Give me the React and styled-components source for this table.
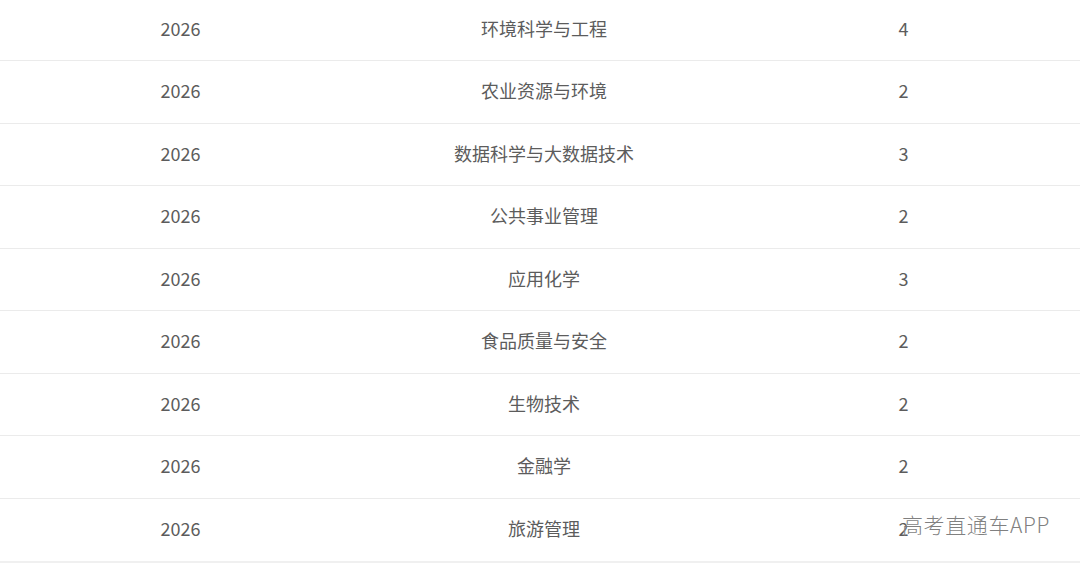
import React from "react";
import styled, { createGlobalStyle } from "styled-components";

const rows = [
  { year: "2026", major: "环境科学与工程", count: 4 },
  { year: "2026", major: "农业资源与环境", count: 2 },
  { year: "2026", major: "数据科学与大数据技术", count: 3 },
  { year: "2026", major: "公共事业管理", count: 2 },
  { year: "2026", major: "应用化学", count: 3 },
  { year: "2026", major: "食品质量与安全", count: 2 },
  { year: "2026", major: "生物技术", count: 2 },
  { year: "2026", major: "金融学", count: 2 },
  { year: "2026", major: "旅游管理", count: 2 }
];

const GlobalStyle = createGlobalStyle`
  html, body {
    margin: 0;
    padding: 0;
    background: #ffffff;
  }
  body {
    font-family: "Noto Sans CJK SC", "Noto Sans", sans-serif;
    overflow: hidden;
  }
`;

export default function App() {
  return (
    <Page>
      <GlobalStyle />
      <Table>
        {rows.map((each, index) => (
          <Row key={index}>
            <Cell>{each.year}</Cell>
            <Cell>{each.major}</Cell>
            <Cell>{each.count}</Cell>
          </Row>
        ))}
      </Table>
      <Watermark>高考直通车APP</Watermark>
    </Page>
  );
}

const Page = styled.div`
  position: relative;
  width: 1080px;
  height: 563px;
  background: #ffffff;
  overflow: hidden;
`;

const Table = styled.div`
  display: flex;
  flex-direction: column;
  width: 100%;
  margin-top: -1.5px;
  border-bottom: 3px solid #f0f0f0;
`;

const Row = styled.div`
  display: grid;
  grid-template-columns: 361px 366px 1fr;
  align-items: center;
  height: 62.5px;
  box-sizing: border-box;
  border-bottom: 1px solid #ebebeb;
  &:last-child {
    border-bottom: none;
  }
`;

const Cell = styled.div`
  text-align: center;
  font-size: 18px;
  color: #5c5c5c;
  line-height: 1;
  padding-bottom: 3px;
`;

const Watermark = styled.div`
  position: absolute;
  left: 902px;
  top: 509px;
  font-family: "Noto Sans CJK SC", "Noto Sans", sans-serif;
  font-weight: 300;
  font-size: 21px;
  color: rgba(105, 105, 105, 0.85);
  text-shadow: 0 0 1px rgba(255, 255, 255, 0.8);
  letter-spacing: 0.6px;
`;
